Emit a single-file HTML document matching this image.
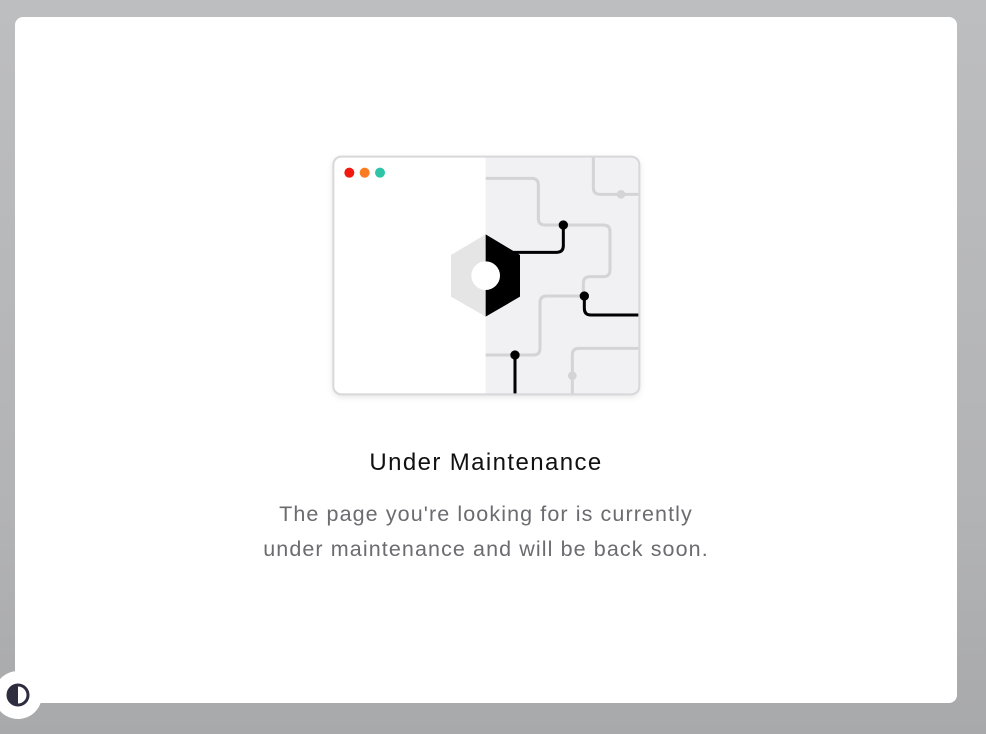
<!DOCTYPE html>
<html><head><style>
html,body{margin:0;padding:0;width:986px;height:734px;overflow:hidden;font-family:"Liberation Sans",sans-serif}
body{background:linear-gradient(180deg,#bdbec0 0%,#b2b3b5 70%,#a8a9ab 100%)}
.card{position:absolute;left:15px;top:17px;width:942px;height:686px;background:#fff;border-radius:8px}
svg.il{position:absolute;left:320px;top:145px}
h1{position:absolute;top:449px;left:0;width:972px;text-align:center;margin:0;font-weight:400;font-size:24px;letter-spacing:1.4px;color:#111}
p{position:absolute;top:497px;left:0;width:972px;text-align:center;margin:0;font-size:21.5px;letter-spacing:1.1px;line-height:35px;color:#6b6b70}
.tog{position:absolute;left:-6px;top:671px;width:48px;height:48px;border-radius:50%;background:#fff}
</style></head><body>
<div class="card"></div>
<svg class="il" width="330" height="260" viewBox="0 0 990 780">
<defs><filter id="s" x="-10%" y="-10%" width="120%" height="120%"><feDropShadow dx="0" dy="6" stdDeviation="10" flood-color="#000" flood-opacity="0.12"/></filter>
<clipPath id="c"><rect x="40" y="35" width="918" height="713" rx="24"/></clipPath></defs>
<rect x="40" y="35" width="918" height="713" rx="24" fill="#fff" filter="url(#s)"/>
<g clip-path="url(#c)">
<rect x="497" y="35" width="470" height="713" fill="#f1f1f3"/>
<g fill="none" stroke="#d4d4d6" stroke-width="9">
<path d="M497 100H635Q655 100 655 120V220Q655 240 675 240H850Q870 240 870 260V375Q870 395 850 395H810Q790 395 790 415V455"/>
<path d="M820 35V128Q820 148 840 148H960"/>
<path d="M793 453H680Q660 453 660 473V610Q660 630 640 630H497"/>
<path d="M960 610H777Q757 610 757 630V750"/>
</g>
<g fill="#d4d4d6"><circle cx="903" cy="148" r="13"/><circle cx="757" cy="692" r="13"/></g>
<g fill="none" stroke="#000" stroke-width="9">
<path d="M570 322H710Q730 322 730 302V240"/>
<path d="M793 453V490Q793 510 813 510H960"/>
<path d="M585 630V750"/>
</g>
<g fill="#000"><circle cx="730" cy="240" r="14"/><circle cx="793" cy="453" r="14"/><circle cx="585" cy="630" r="14"/></g>
<path d="M497 268L393 330V455L497 515Z" fill="#e5e5e5"/>
<path d="M497 268L600 330V455L497 515Z" fill="#000"/>
<circle cx="497" cy="392" r="43" fill="#fff"/>
</g>
<rect x="40" y="35" width="918" height="713" rx="24" fill="none" stroke="#d8d8da" stroke-width="6"/>
<circle cx="88" cy="83" r="15" fill="#f21a10"/><circle cx="134" cy="83" r="15" fill="#f97b22"/><circle cx="180" cy="83" r="15" fill="#2ec4a5"/>
</svg>
<h1>Under Maintenance</h1>
<p>The page you're looking for is currently<br>under maintenance and will be back soon.</p>
<div class="tog"><svg width="48" height="48" viewBox="0 0 48 48" style="position:absolute;left:0;top:0">
<circle cx="24" cy="24" r="10" fill="#fff" stroke="#2e2d3f" stroke-width="3"/>
<path d="M24 14A10 10 0 0 0 24 34Z" fill="#2e2d3f"/></svg></div>
</body></html>
